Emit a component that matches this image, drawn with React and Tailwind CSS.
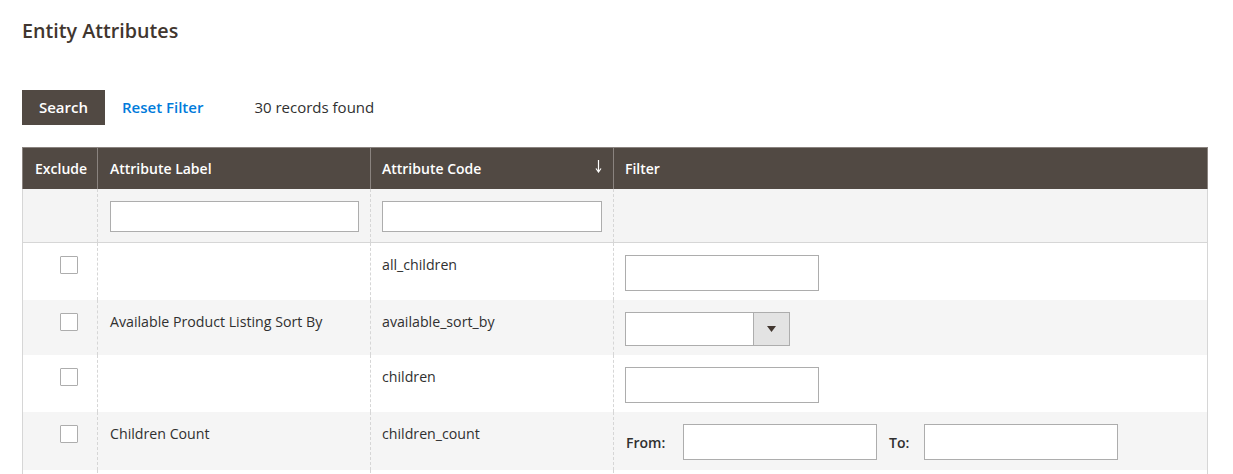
import React from "react";

const font = { fontFamily: '"Open Sans", "Liberation Sans", sans-serif' };

function Checkbox() {
  return (
    <div className="ml-[37px] mt-[1px] h-[18px] w-[18px] rounded-[1px] border border-[#adadad] bg-white" />
  );
}

function TextInput({ w }) {
  return <div className={`h-[36px] ${w} border border-[#adadad] bg-white`} />;
}

function SelectBox() {
  return (
    <div className="flex h-[34px] w-[165px] border border-[#adadad] bg-white">
      <div className="flex-1" />
      <div className="flex w-[36px] items-center justify-center border-l border-[#adadad] bg-[#e3e3e3]">
        <svg width="9" height="6" viewBox="0 0 9 6">
          <path d="M0 0 L9 0 L4.5 6 Z" fill="#41362f" />
        </svg>
      </div>
    </div>
  );
}

function Row({ bg, h, label, code, filter }) {
  return (
    <div className={`grid grid-cols-[74px_273px_243px_594px] ${bg} ${h}`}>
      <div className="pt-[12px]">
        <Checkbox />
      </div>
      <div className="border-l border-dashed border-[#d6d6d6] px-3 pt-[12px] text-[14.2px] leading-[20px] text-[#303030]">
        {label}
      </div>
      <div className="border-l border-dashed border-[#d6d6d6] pl-[11px] pr-3 pt-[12px] text-[14.2px] leading-[20px] text-[#303030]">
        {code}
      </div>
      <div className="border-l border-dashed border-[#d6d6d6] pl-[11px] pt-[12px]">{filter}</div>
    </div>
  );
}

export default function App() {
  return (
    <div className="min-h-screen bg-white pl-[22px] pt-[17px]" style={font}>
      <h1 className="text-[19.7px] font-semibold leading-[28px] text-[#41362f]">Entity Attributes</h1>

      <div className="mt-[45px] flex items-center">
        <button className="h-[35px] w-[83px] bg-[#514943] text-[15px] font-semibold text-white">
          Search
        </button>
        <span className="ml-[17px] text-[15px] font-semibold text-[#007bdb]">Reset Filter</span>
        <span className="ml-[51px] text-[15px] text-[#303030]">30 records found</span>
      </div>

      <div className="mt-[22px] w-[1186px] border-x border-[#d6d6d6]">
        {/* header */}
        <div className="-mx-px grid grid-cols-[75px_273px_243px_595px] border-t border-[#8a837f] bg-[#514943] text-[14px] font-semibold text-white">
          <div className="flex h-[41px] items-center border-l border-[#8a837f] px-3">Exclude</div>
          <div className="flex h-[41px] items-center border-l border-[#8a837f] px-3">Attribute Label</div>
          <div className="relative flex h-[41px] items-center border-l border-[#8a837f] pl-[11px] pr-3">
            Attribute Code
            <svg className="absolute right-[11px] top-[12px]" width="7" height="13" viewBox="0 0 7 13">
              <path d="M3.5 0 V11" stroke="#ffffff" strokeWidth="1.2" />
              <path d="M1 8.5 L3.5 12 L6 8.5" stroke="#ffffff" strokeWidth="1.2" fill="none" />
            </svg>
          </div>
          <div className="flex h-[41px] items-center border-x border-[#8a837f] pl-[11px] pr-3">Filter</div>
        </div>

        {/* filter row */}
        <div className="grid h-[54px] grid-cols-[74px_273px_243px_594px] border-b border-[#d6d6d6] bg-[#f4f4f4]">
          <div />
          <div className="border-l border-dashed border-[#d6d6d6] pl-3 pr-[11px] pt-[12px]">
            <div className="h-[31px] w-full border border-[#adadad] bg-white" />
          </div>
          <div className="border-l border-dashed border-[#d6d6d6] pl-[11px] pr-[11px] pt-[12px]">
            <div className="h-[31px] w-full border border-[#adadad] bg-white" />
          </div>
          <div className="border-l border-dashed border-[#d6d6d6]" />
        </div>

        <Row bg="bg-white" h="h-[57px]" label="" code="all_children" filter={<TextInput w="w-[194px]" />} />
        <Row
          bg="bg-[#f5f5f5]"
          h="h-[55px]"
          label="Available Product Listing Sort By"
          code="available_sort_by"
          filter={<SelectBox />}
        />
        <Row bg="bg-white" h="h-[57px]" label="" code="children" filter={<TextInput w="w-[194px]" />} />
        <Row
          bg="bg-[#f5f5f5]"
          h="h-[58px]"
          label="Children Count"
          code="children_count"
          filter={
            <div className="flex items-center">
              <span className="w-[58px] pl-px text-[14px] font-semibold text-[#303030]">From:</span>
              <div className="h-[36px] w-[194px] border border-[#adadad] bg-white" />
              <span className="ml-[12px] w-[35px] text-[14px] font-semibold text-[#303030]">To:</span>
              <div className="h-[36px] w-[194px] border border-[#adadad] bg-white" />
            </div>
          }
        />
        <div className="grid h-[57px] grid-cols-[74px_273px_243px_594px] bg-white">
          <div />
          <div className="border-l border-dashed border-[#d6d6d6]" />
          <div className="border-l border-dashed border-[#d6d6d6]" />
          <div className="border-l border-dashed border-[#d6d6d6]" />
        </div>
      </div>
    </div>
  );
}
